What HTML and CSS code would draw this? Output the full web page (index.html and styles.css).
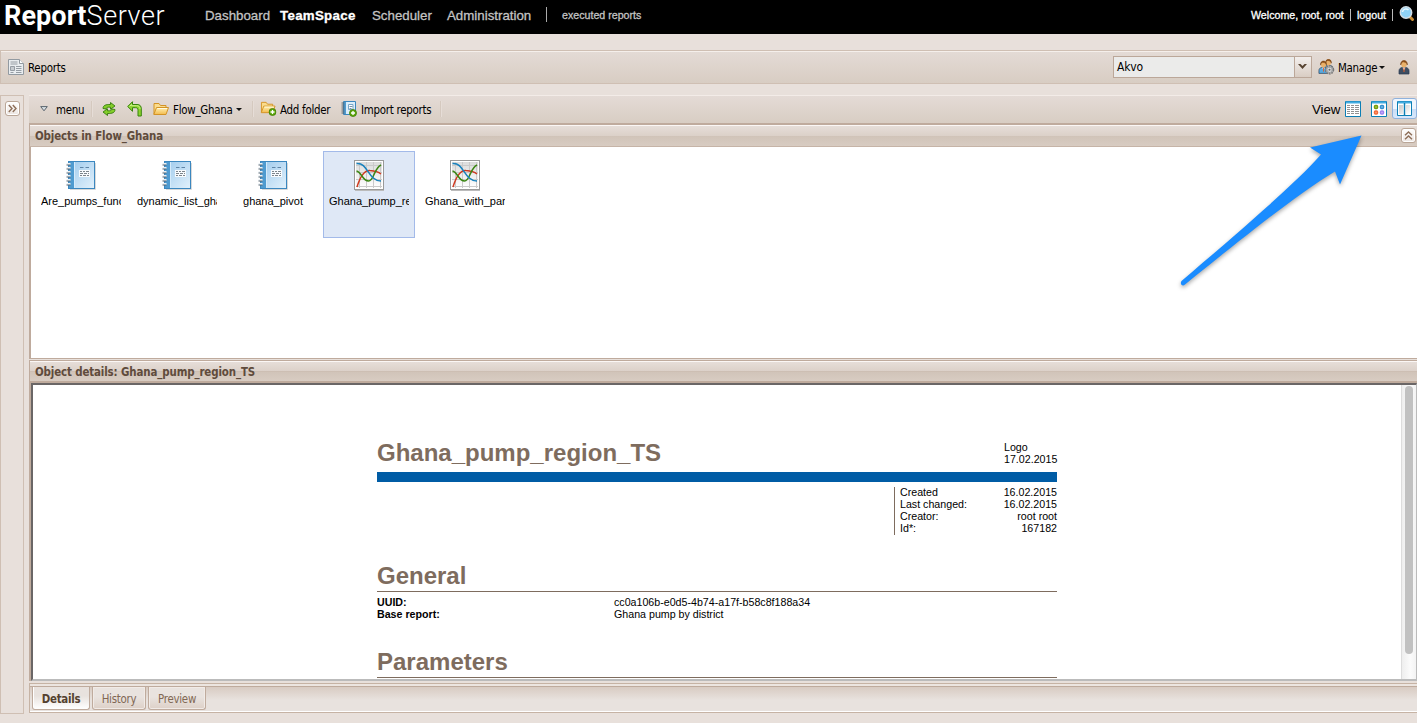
FILE: index.html
```html
<!DOCTYPE html>
<html lang="en">
<head>
<meta charset="utf-8">
<title>ReportServer</title>
<link rel="stylesheet" href="styles.css">
</head>
<body>
<svg class="defs" width="0" height="0">
  <defs>
    <linearGradient id="gFolder" x1="0" y1="0" x2="0" y2="1"><stop offset="0" stop-color="#fff0b4"/><stop offset="1" stop-color="#f3bb4d"/></linearGradient>
    <linearGradient id="gBook" x1="0" y1="0" x2="1" y2="1"><stop offset="0" stop-color="#9cc9ec"/><stop offset="1" stop-color="#e2f1fc"/></linearGradient>
    <linearGradient id="gChart" x1="0" y1="0" x2="0" y2="1"><stop offset="0" stop-color="#dcdcdc"/><stop offset="1" stop-color="#ffffff"/></linearGradient>
    <linearGradient id="gPane" x1="0" y1="0" x2="1" y2="1"><stop offset="0" stop-color="#c9c9c9"/><stop offset="1" stop-color="#ffffff"/></linearGradient>
    <symbol id="plus" viewBox="0 0 8 8"><circle cx="4" cy="4" r="3.500" fill="#5fa80c" stroke="#3d7d05" stroke-width=".8"/><path d="M4 2v4M2 4h4" stroke="#fff" stroke-width="1.300"/></symbol>
    <symbol id="folder" viewBox="0 0 16 16"><path d="M1 13V2.500h5l1.500 2H13V7" fill="#fbdc8c" stroke="#d39325"/><path d="M.8 13.500 3.500 6.500h12L13 13.500z" fill="url(#gFolder)" stroke="#d39325"/><path d="M4.300 7.500h9.800" stroke="#fffbe0"/></symbol>
    <symbol id="book" viewBox="0 0 32 32">
      <path d="M5 30.500h25.500V4" fill="none" stroke="#d9d9d9"/>
      <rect x="3.500" y="2.500" width="26" height="27" fill="url(#gBook)" stroke="#3b87bf"/>
      <rect x="4" y="3" width="5" height="26" fill="#4f9bd0"/><path d="M9.500 3v26" stroke="#d5ebfb"/>
      <path d="M1.500 5h4m-4 4h4m-4 4h4m-4 4h4m-4 4h4m-4 4h4" stroke="#eef3f7" stroke-width="2"/>
      <path d="M1.500 6h4m-4 4h4m-4 4h4m-4 4h4m-4 4h4m-4 4h4" stroke="#566471"/>
      <path d="M15 8.500h3.500m2 0H24" stroke="#5d84a6"/><rect x="14" y="11" width="11" height="7" fill="#f8fbfe"/>
      <path d="M15 12.500h2m1 0h2m1 0h3M15 14.500h3m1 0h3m1 0h1M15 16.500h2m1 0h3m1 0h2" stroke="#7d858c"/>
    </symbol>
    <symbol id="chart" viewBox="0 0 32 32">
      <path d="M2 31.500h29" stroke="#bbb"/>
      <rect x="1.500" y="1.500" width="29" height="29" fill="#fff" stroke="#999"/>
      <rect x="3" y="3" width="26" height="26" fill="url(#gChart)"/>
      <path d="M3 6.500h26M3 13.500h26M3 20.500h26M3 27.500h26M6.500 3v26M13.500 3v26M20.500 3v26M27.500 3v26" stroke="#cacaca"/>
      <path d="M4 28C8 15 12 11 17 11.500c4 .3 8 1 11 3.500" fill="none" stroke="#cf3a20" stroke-width="1.500"/>
      <path d="M3.500 12c5 1 6 10 12 10C21 22 21 9 28 6" fill="none" stroke="#3b8613" stroke-width="1.500"/>
      <path d="M3.500 4.500C15 3 15 22 28 22" fill="none" stroke="#1781bd" stroke-width="1.500"/>
    </symbol>
    <symbol id="person" viewBox="0 0 12 16"><path d="M1 15v-3c0-2 1-3 3-3.500h4c2 .5 3 1.500 3 3.500v3z" fill="var(--coat,#3e4e62)" stroke="#293a50" stroke-width=".7"/><path d="m4.500 8.500 1.500 3 1.500-3z" fill="#fff"/><path d="M6 9v4" stroke="#e45b24"/><ellipse cx="6" cy="5" rx="2.800" ry="3.500" fill="#e9b16a"/><path d="M2.700 6C2 0 10 0 9.300 6 8.500 3 7 3.500 6 3S3.500 3 2.700 6z" fill="#8b4d18" stroke="#713b0e" stroke-width=".5"/></symbol>
  </defs>
</svg>

<header class="top">
  <div class="logo"><b>Report</b><span>Server</span></div>
  <nav class="nav">
    <a class="n-dash">Dashboard</a><a class="n-team">TeamSpace</a><a class="n-sched">Scheduler</a><a class="n-admin">Administration</a><i class="bar"></i><a class="n-exec">executed reports</a>
  </nav>
  <div class="user"><span class="welcome">Welcome, root, root</span><i></i><span class="logout">logout</span><i></i>
    <svg width="16" height="16" viewBox="0 0 16 16"><path d="m11 11 2.500 2.500" stroke="#c98d35" stroke-width="3" stroke-linecap="round"/><circle cx="7" cy="6.500" r="5.700" fill="#8fd2f6" stroke="#d3dde5" stroke-width="1.500"/><path d="M3.500 6c.5-3 4-4 6-2" fill="none" stroke="#e9f8ff" stroke-width="1.500"/></svg>
  </div>
</header>

<div class="reports-bar">
  <svg width="16" height="16" viewBox="0 0 16 16"><path d="M.5.500h11l4 4v11H.5z" fill="#e9edf0" stroke="#929aa1"/><path d="M11.500.500v4h4" fill="#fff" stroke="#929aa1"/><path d="M2.500 3h7M2.500 5h7M8 7.500h5.500M8 9.500h5.500M2.500 13.500h3M8 11.500h5.500M8 13.500h5.500" stroke="#969da4"/><path d="M2.500 7.500h4v4h-4z" fill="#c6cbd0" stroke="#969da4"/></svg>
  <span class="reports-label">Reports</span>
  <div class="combo"><span>Akvo</span><i><svg width="9" height="6" viewBox="0 0 9 6"><path d="M0 0h2.500l2 2 2-2H9L4.500 5z" fill="#56422f"/></svg></i></div>
  <svg class="people" width="17" height="16" viewBox="0 0 17 16"><g style="--coat:#58a9df"><use href="#person" x="5" y="-1" width="11" height="14"/><use href="#person" width="11" height="16"/></g><circle cx="11.500" cy="10.800" r="3.500" fill="#d9d9d9" stroke="#777" stroke-width="2.500" stroke-dasharray="1.500 .7"/><circle cx="11.500" cy="10.800" r="3" fill="none" stroke="#aaa"/><circle cx="11.500" cy="10.800" r="1" fill="#666"/></svg>
  <span class="manage">Manage</span><i class="caret"></i>
  <svg class="one" width="12" height="16"><use href="#person"/></svg>
</div>

<main class="work">
  <aside class="rail"><div class="tool"><svg width="9" height="9" viewBox="0 0 9 9"><path d="m.8 1 3.200 3.500-3.200 3.500m4-7 3.200 3.500-3.200 3.500" fill="none" stroke="#8d6e58" stroke-width="1.400"/></svg></div></aside>
  <section class="main">
    <div class="toolbar">
      <svg class="tri" width="8" height="6" viewBox="0 0 8 6"><path d="M.7.600h6.600L4 4.800z" fill="#d8dfe4" stroke="#59646d"/></svg>
      <span class="t-menu">menu</span><i class="sep s1"></i>
      <svg class="refresh" width="14" height="14" viewBox="0 0 14 14"><g fill="#84ce2a" stroke="#347c0c" stroke-width=".9" stroke-linejoin="round"><path d="M1 6.500C1 3.500 3.500 2.300 8.500 2.500V.5L13 4 8.500 7.200V5.200C5.500 5 4.500 5.500 4 7z"/><path d="M13 7.500c0 3-2.500 4.200-7.500 4v2L1 10l4.500-3.200v2c3 .2 4-.3 4.500-1.800z"/></g></svg>
      <svg class="up" width="15" height="16" viewBox="0 0 15 16"><path d="M.7 5.500 5.500.7v2.800h4.500c3 0 4.300 1.500 4.300 4.500v7h-3.300V9.500c0-2-.7-2.800-2.500-2.800h-3v3.600z" fill="#8bd32e" stroke="#37830d" stroke-linejoin="round"/><path d="M2.500 5.500 4.500 3.500v1.200h5c2.500 0 3.500 1 3.500 3.500" fill="none" stroke="#cdf28b"/></svg>
      <svg class="fold" width="16" height="16"><use href="#folder"/></svg>
      <span class="t-flow">Flow_Ghana</span><i class="caret"></i><i class="sep s2"></i>
      <svg class="addf" width="17" height="17"><use href="#folder" width="16" height="15"/><use href="#plus" x="8.500" y="8" width="8" height="8"/></svg>
      <span class="t-add">Add folder</span>
      <svg class="imp" width="16" height="16" viewBox="0 0 16 16"><path d="M2.500.500h12v13h-12z" fill="#dceefa" stroke="#3b87bf"/><path d="M3 1h2v12H3z" fill="#4f9bd0"/><path d="M.5 2h3M.5 4h3M.5 6h3M.5 8h3M.5 10h3M.5 12h3" stroke="#5b6670"/><path d="M7.500 3.500h4.500v5H7.500z" fill="#fff" stroke="#7aa6c8"/><path d="M8.500 5.500h3M8.500 7.500h2" stroke="#7593a9"/><use href="#plus" x="8" y="8" width="8" height="8"/></svg>
      <span class="t-imp">Import reports</span><i class="sep s3"></i>
      <div class="view"><span>View</span>
        <svg class="v1" width="16" height="16" viewBox="0 0 16 16"><path d="M.5.500h15v15H.5z" fill="#fff" stroke="#0d7fb5"/><path d="M1 1.500h14" stroke="#43ace0" stroke-width="2"/><path d="M2 4.500h3m1 0h3m1 0h4M2 6.500h3m1 0h3m1 0h4M2 8.500h3m1 0h3m1 0h4M2 10.500h3m1 0h3m1 0h4M2 12.500h3m1 0h3m1 0h4" stroke="#929292"/></svg>
        <svg class="v2" width="16" height="16" viewBox="0 0 16 16"><path d="M.5.500h15v15H.5z" fill="#fff" stroke="#0d7fb5"/><path d="M1 1.500h14" stroke="#43ace0" stroke-width="2"/><g stroke-width="1.500"><rect x="3.500" y="4.500" width="3" height="3" rx="1" fill="#b5cf55" stroke="#769c0c"/><rect x="9.500" y="4.500" width="3" height="3" rx="1" fill="#7dc8f0" stroke="#368fce"/><rect x="3.500" y="10" width="3" height="3" rx="1" fill="#ffa078" stroke="#f36a39"/><rect x="9.500" y="10" width="3" height="3" rx="1" fill="#c8b0fb" stroke="#a082ef"/></g></svg>
        <div class="pressed"><svg width="15" height="15" viewBox="0 0 15 15"><path d="M.5.500h14v14H.5z" fill="#fff" stroke="#0d7fb5"/><path d="M1 1.500h13" stroke="#43ace0" stroke-width="2"/><path d="M2 4h4v9H2zM9 4h4v9H9z" fill="url(#gPane)"/><path d="M7.500 2v12" stroke="#0d7fb5" stroke-width="1.500"/></svg></div>
      </div>
    </div>
    <div class="phead h-objects"><span>Objects in Flow_Ghana</span><div class="tool"><svg width="9" height="9" viewBox="0 0 9 9"><path d="M1 4.200 4.500 1 8 4.200M1 8.200 4.500 5 8 8.200" fill="none" stroke="#8d6e58" stroke-width="1.400"/></svg></div></div>
    <div class="objects">
      <div class="item"><svg width="32" height="32"><use href="#book"/></svg><span>Are_pumps_func</span></div>
      <div class="item"><svg width="32" height="32"><use href="#book"/></svg><span>dynamic_list_gha</span></div>
      <div class="item"><svg width="32" height="32"><use href="#book"/></svg><span class="mid">ghana_pivot</span></div>
      <div class="item selected"><svg width="32" height="32"><use href="#chart"/></svg><span>Ghana_pump_re</span></div>
      <div class="item"><svg width="32" height="32"><use href="#chart"/></svg><span>Ghana_with_par</span></div>
    </div>
    <div class="phead h-details"><span>Object details: Ghana_pump_region_TS</span></div>
    <div class="frame">
      <div class="doc">
        <div class="doc-top"><h1>Ghana_pump_region_TS</h1><div class="stamp">Logo<br>17.02.2015</div></div>
        <div class="blue"></div>
        <dl class="meta"><dt>Created</dt><dd>16.02.2015</dd><dt>Last changed:</dt><dd>16.02.2015</dd><dt>Creator:</dt><dd>root root</dd><dt>Id*:</dt><dd>167182</dd></dl>
        <h2>General</h2>
        <dl class="props"><dt>UUID:</dt><dd>cc0a106b-e0d5-4b74-a17f-b58c8f188a34</dd><dt>Base report:</dt><dd>Ghana pump by district</dd></dl>
        <h2>Parameters</h2>
      </div>
      <div class="scroll"><i></i></div>
    </div>
    <div class="tabs"><div class="tab active">Details</div><div class="tab t-hist">History</div><div class="tab t-prev">Preview</div></div>
  </section>
</main>

<svg class="pointer" width="200" height="170" viewBox="1170 125 200 170"><path d="M1361.500 135.500 1310 147.500 1321 154.500C1298 181 1240 231 1181.500 281 1179.500 284 1182.500 287 1185 284.500 1240 240 1300 192 1335 171.500L1340 184.500z" fill="#1a8cff"/></svg>
</body>
</html>
```
FILE: styles.css
```css
* { box-sizing: border-box; }
body { margin: 0; width: 1417px; height: 723px; overflow: hidden; background: #e8e0db; color: #000; font: 11.400px/14px "DejaVu Sans Condensed", "DejaVu Sans", sans-serif; letter-spacing: -.25px; white-space: nowrap; }
.defs { position: absolute; }
svg { display: block; flex: none; }
i { display: block; flex: none; }

.top { height: 34px; background: #000; display: flex; font-family: "Liberation Sans", Arial, sans-serif; color: #fff; letter-spacing: 0; }
.logo { width: 205px; padding-left: 4px; font: 27px/32px Roboto, sans-serif; }
.logo b { font-weight: 700; letter-spacing: .1px; }
.logo span { font-weight: 300; letter-spacing: .55px; }
.nav { display: flex; font-size: 13.300px; line-height: 31px; color: #c3c3c3; -webkit-text-stroke: .3px; }
.n-dash { width: 75px; }
.n-team { width: 92px; color: #fff; font-weight: 700; letter-spacing: .3px; }
.n-sched { width: 75px; }
.n-admin { width: 99px; }
.bar { width: 1px; height: 15px; margin: 7px 15px 0 0; background: #aaa; }
.n-exec { font-size: 10.670px; }
.user { margin-left: auto; display: flex; font-size: 10.670px; line-height: 31px; -webkit-text-stroke: .3px; width: 166px; }
.user i { width: 1px; height: 12px; margin-top: 9px; background: #bbb; }
.welcome { width: 99px; }
.logout { width: 35px; margin-left: 6px; }
.user svg { margin: 6px 0 0 6px; }

.reports-bar { margin-top: 16px; height: 34px; border: solid #cfbfb3; border-width: 1px 0 1px 1px; box-shadow: inset 0 1px #f5efeb; background: linear-gradient(#e4dbd6, #d8cdc3); display: flex; align-items: center; padding-left: 7px; }
.reports-label { margin: 2px 0 0 4px; width: 1085px; }
.combo { width: 199px; height: 22px; border: 1px solid #bba799; background: #ebebea; display: flex; font-size: 12px; line-height: 21px; letter-spacing: -.2px; padding-left: 3px; justify-content: space-between; }
.combo i { width: 17px; border-left: 1px solid #bba799; background: linear-gradient(#f3efed, #d9cdc3); padding: 7px 0 0 3px; }
.people { margin-left: 6px; }
.manage { margin: 2px 0 0 3px; width: 39px; }
.caret { width: 0; height: 0; border: solid transparent; border-width: 3px 3px 0; border-top-color: #111; margin-left: 2px; }
.one { margin-left: 13px; }

.work { margin-top: 11px; display: flex; gap: 5px; }
.rail { width: 24px; height: 619px; border: 1px solid #cfbfb3; padding: 5px 0 0 4px; }
.tool { width: 15px; height: 15px; border: 1px solid #baa697; border-radius: 3px; background: linear-gradient(#fff, #ece5e1); box-shadow: inset 0 0 0 1px #fff; padding: 2px; }
.main { width: 1388px; }
.toolbar { height: 30px; border-top: 1px solid #f3ece8; border-bottom: 2px solid #bfab9d; background: linear-gradient(#e4dbd6, #d8cdc3); display: flex; align-items: center; padding: 0 0 2px 11px; }
.tri { margin: 0; }
.t-menu { width: 27px; margin: 3px 0 0 8px; }
.sep { width: 2px; height: 16px; background: #d5c9bf; border-right: 1px solid #e6ddd7; }
.s1 { margin-left: 8px; }
.refresh { margin-left: 9px; }
.up { margin-left: 11px; }
.fold { margin-left: 11px; }
.t-flow { width: 61px; margin: 3px 0 0 4px; }
.toolbar .caret { margin: 2px 0 0 2px; }
.s2 { margin-left: 10px; }
.addf { margin-left: 6px; }
.t-add { width: 51px; margin: 3px 0 0 3px; }
.imp { margin-left: 10px; }
.t-imp { width: 73px; margin: 3px 0 0 4px; }
.s3 { margin-left: 6px; }
.view { margin-left: auto; display: flex; align-items: center; font: 13.300px "Liberation Sans", Arial, sans-serif; letter-spacing: -.1px; }
.view > span { width: 33px; padding-top: 2px; }
.v2 { margin-left: 10px; }
.pressed { width: 25px; height: 21px; margin-left: 5px; border: 1px solid #8fb2dd; border-radius: 3px; background: linear-gradient(#f0f6fe 50%, #c8dcf5 50%, #d9e8fb); padding: 2px 0 0 4px; }

.phead { border-left: 1px solid #bfab9d; border-bottom: 1px solid #c6b4a7; box-shadow: inset 0 1px #fbf7f5; background: linear-gradient(#e7dfda, #dcd1c9 50%, #c9b9ad 50%, #d1c4b9 55%, #d8ccc2); color: #5f4b3c; font-weight: 700; letter-spacing: -.12px; display: flex; justify-content: space-between; padding: 4px 1px 0 5px; }
.phead .tool { margin-top: -1px; }
.h-objects { height: 22px; }
.objects { height: 212px; background: #fff; border-left: 2px solid #bfab9d; border-bottom: 1px solid #bfab9d; display: flex; gap: 4px; padding: 4px 0 0 4px; }
.item { width: 92px; height: 87px; border: 1px solid transparent; padding: 7px 5px; display: flex; flex-direction: column; align-items: center; font: 11px/14px "Liberation Sans", Arial, sans-serif; letter-spacing: 0; }
.item span { width: 80px; overflow: hidden; margin-top: 3px; }
.item .mid { text-align: center; }
.selected { background: #dfe8f6; border-color: #a3bae9; }
.h-details { height: 23px; margin-top: 1px; border-top: 1px solid #bfab9d; border-bottom: 2px solid #bfab9d; }
.frame { height: 298px; margin-left: 2px; border: solid #6a6666; border-width: 2px 1px 2px 2px; border-bottom-color: #bbb; border-right-color: #bbb; background: #fff; display: flex; overflow: hidden; box-shadow: -2px 0 #bfab9d; }
.doc { width: 680px; margin-left: 344px; padding-top: 53px; font: 10.670px/12px "Liberation Sans", Arial, sans-serif; letter-spacing: 0; }
.doc-top { display: flex; justify-content: space-between; height: 34px; }
.stamp { width: 53px; margin-top: 3px; }
h1, h2 { margin: 0; font-size: 24px; line-height: 30px; color: #7e6c5e; }
.blue { height: 10px; background: #005ca5; }
.meta { margin: 5px 0 0 auto; width: 163px; height: 48px; border-left: 1px solid #7e6c5e; padding-left: 5px; display: grid; grid-template: repeat(4, 12px) / 1fr auto; line-height: 10px; }
dd { margin: 0; }
.meta dd { text-align: right; }
h2 { margin-top: 26px; height: 31px; border-bottom: 1px solid #7e6c5e; }
.props { margin: 5px 0 0; display: grid; grid-template: repeat(2, 12px) / 237px 1fr; line-height: 10px; }
.props dt { font-weight: 700; }
.scroll { margin-left: auto; width: 15px; background: linear-gradient(90deg, #eee, #fbfbfb 60%, #f3f3f3); border-left: 1px solid #ddd; padding: 1px 0 0 3px; }
.scroll i { width: 8px; height: 268px; border-radius: 4px; background: #c1c1c1; }

.tabs { height: 30px; border: solid #c6b3a4; border-width: 1px 0 1px 1px; margin-top: 2px; display: flex; padding: 3px 0 0 2px; gap: 2px; background: linear-gradient(#ece5e0 2px, #bfab9d 2px, #bfab9d 3px, #d8cbc2 3px, #e8e2de 16px, #e8e2de 27px, #fff 27px); }
.tab { height: 23px; border: 1px solid #bfab9d; border-top: 0; border-radius: 0 0 3px 3px; color: #816854; text-align: center; line-height: 25px; background: linear-gradient(#e9e3df 45%, #ddd0c7); box-shadow: inset 0 0 0 1px #f1ebe7; }
.active { width: 58px; color: #54412f; font-weight: 700; background: linear-gradient(#e8e2de 40%, #fff); box-shadow: inset 1px 0 #fff; }
.t-hist { width: 54px; }
.t-prev { width: 58px; }
.pointer { position: absolute; left: 1170px; top: 125px; filter: drop-shadow(0 2px 2px rgba(0,0,0,.35)); }
```
